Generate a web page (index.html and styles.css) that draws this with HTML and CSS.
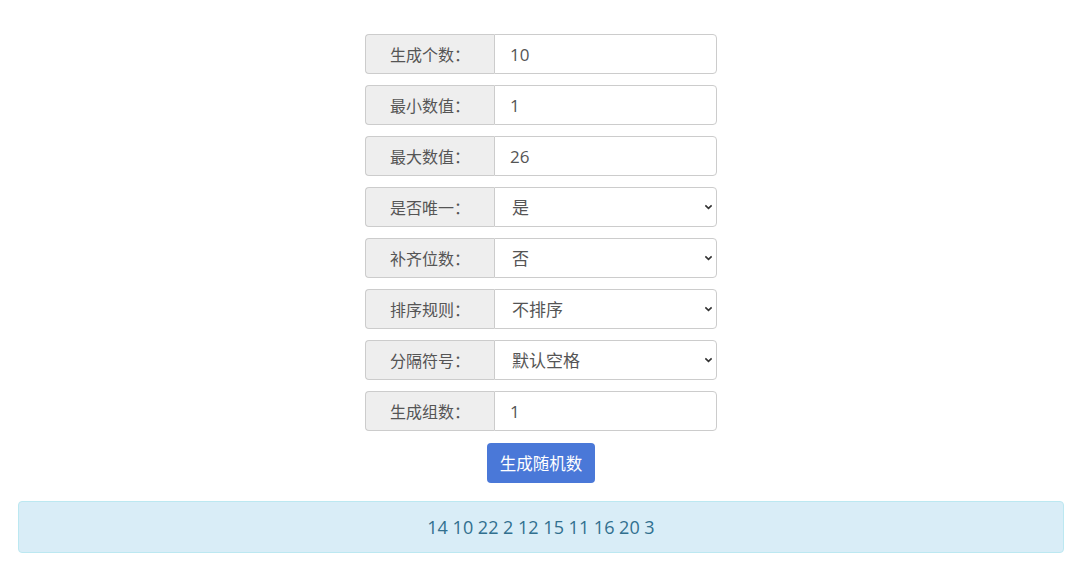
FILE: index.html
```html
<!DOCTYPE html>
<html lang="zh-CN">
<head>
  <meta charset="UTF-8">
  <meta name="viewport" content="width=device-width, initial-scale=1.0">
  <title>随机数生成器</title>
  <link rel="stylesheet" href="styles.css">
</head>
<body>
  <div class="form-box">
    <div class="input-group">
      <span class="addon">生成个数：</span>
      <input class="field" type="text" value="10">
    </div>
    <div class="input-group">
      <span class="addon">最小数值：</span>
      <input class="field" type="text" value="1">
    </div>
    <div class="input-group">
      <span class="addon">最大数值：</span>
      <input class="field" type="text" value="26">
    </div>
    <div class="input-group">
      <span class="addon">是否唯一：</span>
      <select class="field">
        <option>是</option>
        <option>否</option>
      </select>
    </div>
    <div class="input-group">
      <span class="addon">补齐位数：</span>
      <select class="field">
        <option>否</option>
        <option>是</option>
      </select>
    </div>
    <div class="input-group">
      <span class="addon">排序规则：</span>
      <select class="field">
        <option>不排序</option>
        <option>从小到大</option>
        <option>从大到小</option>
      </select>
    </div>
    <div class="input-group">
      <span class="addon">分隔符号：</span>
      <select class="field">
        <option>默认空格</option>
        <option>逗号</option>
        <option>换行</option>
      </select>
    </div>
    <div class="input-group">
      <span class="addon">生成组数：</span>
      <input class="field" type="text" value="1">
    </div>
    <button class="btn">生成随机数</button>
  </div>

  <div class="alert">14 10 22 2 12 15 11 16 20 3</div>
</body>
</html>
```

FILE: styles.css
```css
* { box-sizing: border-box; }
body {
  font-family: "Open Sans", "Noto Sans CJK SC", sans-serif;
  margin: 0;
  padding: 34px 16px 0 18px;
  background: #fff;
  color: #555;
}
.form-box {
  width: 352px;
  margin: 0 auto;
  display: flex;
  flex-direction: column;
  align-items: center;
  gap: 11px;
}
.input-group {
  display: flex;
  width: 100%;
  height: 40px;
}
.addon {
  width: 129px;
  flex-shrink: 0;
  display: flex;
  align-items: center;
  justify-content: center;
  background: #eee;
  border: 1px solid #ccc;
  border-right: none;
  border-radius: 4px 0 0 4px;
  font-size: 16px;
  color: #555;
}
.field {
  flex: 1;
  min-width: 0;
  height: 40px;
  padding: 0 15px;
  border: 1px solid #ccc;
  border-radius: 0 4px 4px 0;
  font-family: inherit;
  font-size: 17px;
  color: #555;
  background: #fff;
  outline: none;
}
select.field {
  padding-left: 17px;
  appearance: none;
  background-image: url("data:image/svg+xml;utf8,<svg xmlns='http://www.w3.org/2000/svg' width='10' height='6' viewBox='0 0 10 6'><path d='M1.5 1.2 L5 4.6 L8.5 1.2' fill='none' stroke='%23333' stroke-width='1.8'/></svg>");
  background-repeat: no-repeat;
  background-position: right 3px center;
  background-size: 9px 6px;
}
.btn {
  margin-top: 1px;
  height: 40px;
  padding: 0 13px;
  background: #4a78d8;
  color: #fff;
  border: none;
  border-radius: 4px;
  font-family: inherit;
  font-size: 16.5px;
  cursor: pointer;
}
.alert {
  margin-top: 18px;
  height: 52px;
  display: flex;
  align-items: center;
  justify-content: center;
  background: #d9edf7;
  border: 1px solid #bce8f1;
  border-radius: 4px;
  color: #31708f;
  font-size: 18px;
}
```
